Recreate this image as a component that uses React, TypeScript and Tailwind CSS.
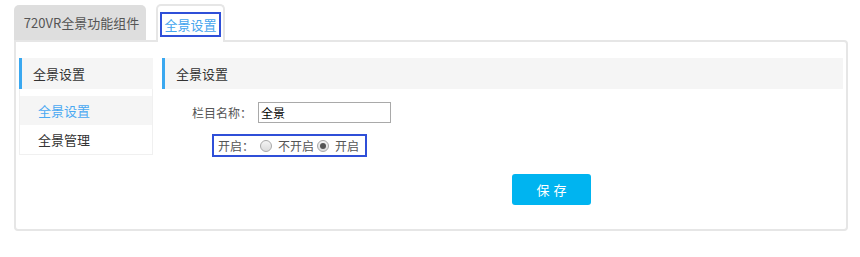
import { FC } from "react";

const font = "font-['Noto_Sans_CJK_SC','Noto_Sans',sans-serif]";

const Radio: FC<{ checked?: boolean }> = ({ checked }) => (
  <span className="flex h-[12px] w-[12px] shrink-0 items-center justify-center rounded-full border border-[#a8a8a8] bg-gradient-to-b from-[#f4f4f4] to-[#dcdcdc]">
    {checked && <span className="h-[6px] w-[6px] rounded-full bg-[#555]" />}
  </span>
);

const SectionHeader: FC<{ title: string }> = ({ title }) => (
  <div className="flex h-[31px] items-center bg-[#f5f5f5]">
    <span className="h-full w-[3px] bg-[#3aa8f0]" />
    <span className="ml-[11px] text-[13px] leading-none text-[#333]">{title}</span>
  </div>
);

export default function App() {
  return (
    <div className={`${font} h-[257px] w-[860px] bg-white pt-[4px] pl-[14px]`}>
      {/* tabs */}
      <div className="flex items-end gap-[10px]">
        <div className="flex h-[35px] w-[132px] items-center justify-center rounded-t-[5px] bg-[#dedede] pl-[3px] text-[13px] leading-none text-[#555]">
          720VR全景功能组件
        </div>
        <div className="relative z-10 -mb-[2px] flex h-[38px] w-[69px] items-start justify-center rounded-t-[5px] border-2 border-b-0 border-[#e6e6e6] bg-white pt-[6px]">
          <span className="whitespace-nowrap border-2 border-[#2f4fd8] px-[2px] py-[4px] text-[13px] leading-[13px] text-[#45a5ee]">
            全景设置
          </span>
        </div>
      </div>

      {/* panel */}
      <div className="flex h-[191px] w-[834px] gap-[9px] rounded-b-[4px] rounded-tr-[4px] border-2 border-[#e6e6e6] px-[3px] pt-[16px]">
        {/* sidebar */}
        <div className="h-[97px] w-[134px] border border-[#f0f0f0]">
          <div className="-m-px">
            <SectionHeader title="全景设置" />
          </div>
          <div className="mt-[8px]">
            <div className="flex h-[29px] items-center bg-[#f5f5f5] pl-[18px] text-[13px] leading-none text-[#4aa9f2]">
              全景设置
            </div>
            <div className="flex h-[29px] items-center pl-[18px] text-[13px] leading-none text-[#333]">
              全景管理
            </div>
          </div>
        </div>

        {/* content */}
        <div className="w-[681px]">
          <SectionHeader title="全景设置" />

          <div className="mt-[13px] flex items-center">
            <span className="w-[90px] whitespace-nowrap text-right text-[12px] leading-none text-[#555]">栏目名称：</span>
            <div className="ml-[6px] flex h-[21px] w-[133px] items-center border border-[#a9a9a9] pl-[2px] text-[12px] leading-none text-black">
              全景
            </div>
          </div>

          <div className="mt-[11px] ml-[50px] flex h-[23px] w-fit items-center whitespace-nowrap border-2 border-[#2f4fd8] pr-[6px] pl-[4px] text-[12px] leading-none text-[#555]">
            <span className="w-[36px]">开启：</span>
            <span className="ml-[6px]">
              <Radio />
            </span>
            <span className="ml-[6px] w-[36px]">不开启</span>
            <span className="ml-[3px]">
              <Radio checked />
            </span>
            <span className="ml-[6px]">开启</span>
          </div>

          <button className="mt-[17px] ml-[350px] flex h-[31px] w-[79px] items-center justify-center rounded-[3px] bg-[#00b4f0] pl-[4px] text-[13px] leading-none tracking-[4px] text-white">
            保存
          </button>
        </div>
      </div>
    </div>
  );
}
